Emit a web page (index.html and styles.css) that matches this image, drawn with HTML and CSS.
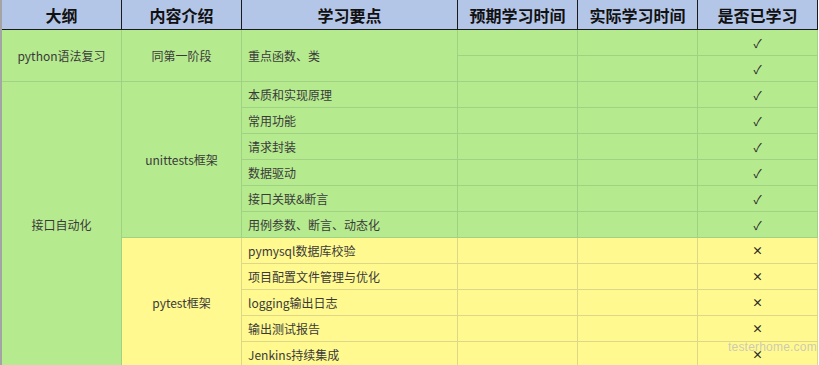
FILE: index.html
```html
<!DOCTYPE html>
<html lang="zh-CN">
<head>
<meta charset="utf-8">
<title>学习计划</title>
<link rel="stylesheet" href="styles.css">
</head>
<body>
<div class="sheet">
  <div class="grid">
    <div class="h">大纲</div>
    <div class="h">内容介绍</div>
    <div class="h">学习要点</div>
    <div class="h">预期学习时间</div>
    <div class="h">实际学习时间</div>
    <div class="h">是否已学习</div>

    <div class="c g ctr r2s2 c1">python语法复习</div>
    <div class="c g ctr r2s2 c2">同第一阶段</div>
    <div class="c g lft r2s2 c3">重点函数、类</div>
    <div class="c g r2 c4"></div>
    <div class="c g r2 c5"></div>
    <div class="c g ctr mark r2 c6">✓</div>
    <div class="c g r3 c4"></div>
    <div class="c g r3 c5"></div>
    <div class="c g ctr mark r3 c6">✓</div>

    <div class="c g ctr c1 big">接口自动化</div>
    <div class="c g ctr c2 unit">unittests框架</div>
    <div class="c y ctr c2 pyt">pytest框架</div>

    <div class="c g lft">本质和实现原理</div><div class="c g"></div><div class="c g"></div><div class="c g ctr mark">✓</div>
    <div class="c g lft">常用功能</div><div class="c g"></div><div class="c g"></div><div class="c g ctr mark">✓</div>
    <div class="c g lft">请求封装</div><div class="c g"></div><div class="c g"></div><div class="c g ctr mark">✓</div>
    <div class="c g lft">数据驱动</div><div class="c g"></div><div class="c g"></div><div class="c g ctr mark">✓</div>
    <div class="c g lft">接口关联&amp;断言</div><div class="c g"></div><div class="c g"></div><div class="c g ctr mark">✓</div>
    <div class="c g lft">用例参数、断言、动态化</div><div class="c g"></div><div class="c g"></div><div class="c g ctr mark">✓</div>

    <div class="c y lft">pymysql数据库校验</div><div class="c y"></div><div class="c y"></div><div class="c y ctr cross">×</div>
    <div class="c y lft">项目配置文件管理与优化</div><div class="c y"></div><div class="c y"></div><div class="c y ctr cross">×</div>
    <div class="c y lft">logging输出日志</div><div class="c y"></div><div class="c y"></div><div class="c y ctr cross">×</div>
    <div class="c y lft">输出测试报告</div><div class="c y"></div><div class="c y"></div><div class="c y ctr cross">×</div>
    <div class="c y lft">Jenkins持续集成</div><div class="c y"></div><div class="c y"></div><div class="c y ctr cross">×</div>
  </div>
  <div class="watermark">testerhome.com</div>
</div>
</body>
</html>
```

FILE: styles.css
```css
html, body {
  margin: 0;
  padding: 0;
  background: #ffffff;
  overflow: hidden;
}

.sheet {
  position: relative;
  width: 819px;
  height: 365px;
  overflow: hidden;
  font-family: "Noto Sans CJK SC", "Noto Sans", sans-serif;
}

.grid {
  display: grid;
  grid-template-columns: 120px 120px 216px 120px 120px 120px;
  grid-template-rows: 30px repeat(13, 26px);
  border-left: 2px solid #a4a4a4;
  width: 816px;
}

.h {
  background: #b4c6e7;
  border-right: 1px solid #1a1a1a;
  border-bottom: 1px solid #1a1a1a;
  display: flex;
  align-items: center;
  justify-content: center;
  font-weight: bold;
  font-size: 16px;
  color: #111111;
  line-height: 1;
}

.c {
  display: flex;
  align-items: center;
  font-size: 12px;
  color: #3a3a3a;
  line-height: 1;
  white-space: nowrap;
}

.g {
  background: #b6ea8f;
  border-right: 1px solid #a1d283;
  border-bottom: 1px solid #a1d283;
}

.y {
  background: #fff98f;
  border-right: 1px solid #ddd788;
  border-bottom: 1px solid #ddd788;
}

.ctr { justify-content: center; }
.lft { padding-left: 6px; }

.mark { font-size: 12px; color: #2a2a2a; }
.cross { font-size: 11px; font-weight: bold; color: #2a2a2a; }

.c1 { grid-column: 1; }
.c2 { grid-column: 2; }
.c3 { grid-column: 3; }
.c4 { grid-column: 4; }
.c5 { grid-column: 5; }
.c6 { grid-column: 6; }
.r2 { grid-row: 2; }
.r3 { grid-row: 3; }
.r2s2 { grid-row: 2 / span 2; }

.big { grid-row: 4 / span 11; }
.unit { grid-row: 4 / span 6; }
.pyt { grid-row: 10 / span 5; }

.grid > .lft:not(.c3) { grid-column: 3; }

.watermark {
  position: absolute;
  left: 728px;
  top: 341px;
  font-family: "Liberation Sans", sans-serif;
  font-size: 12px;
  letter-spacing: 0.2px;
  line-height: 1;
  color: rgba(175, 175, 200, 0.65);
  pointer-events: none;
}
```
